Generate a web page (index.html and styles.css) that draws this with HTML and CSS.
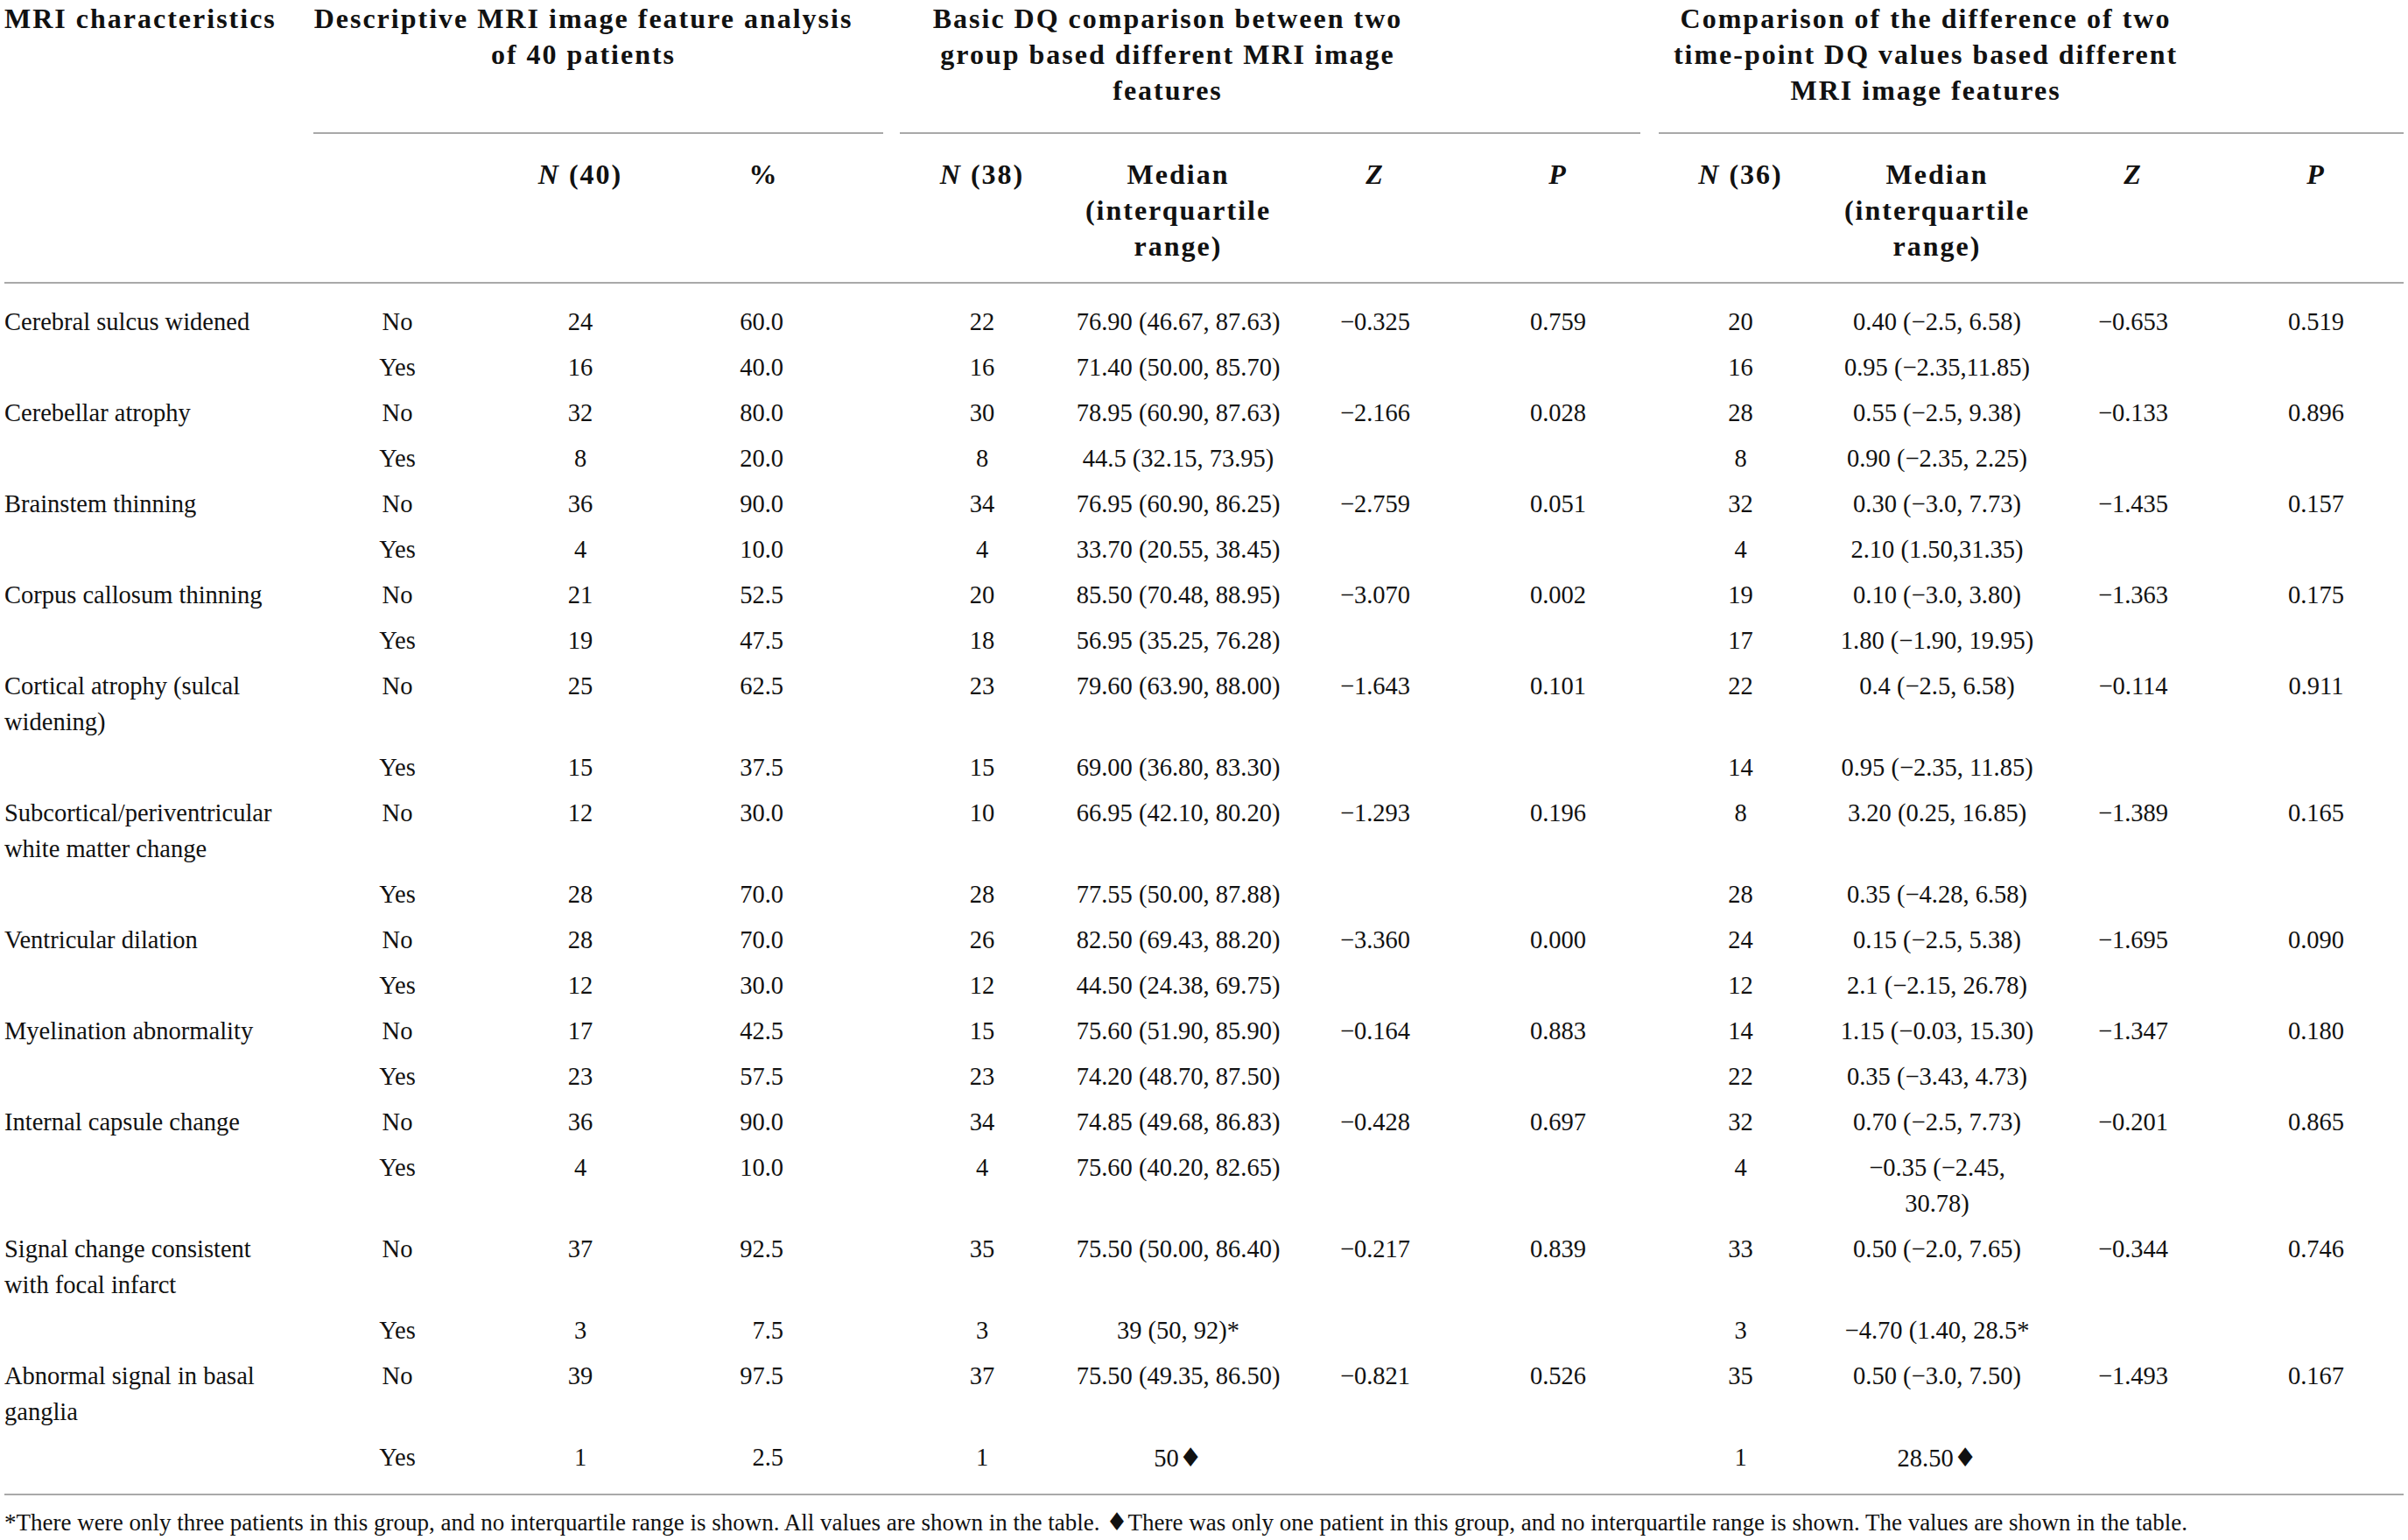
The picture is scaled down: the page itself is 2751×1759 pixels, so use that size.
FILE: index.html
```
<!DOCTYPE html>
<html>
  <head>
    <meta charset="utf-8">
    <title>MRI image features and DQ</title>
    <link rel="stylesheet" href="styles.css">
  </head>
  <body>
    <div class="page">
      <table class="mri">
        <colgroup>
          <col class="c-label">
          <col class="c-yn">
          <col class="c-n40">
          <col class="c-pct">
          <col class="c-gap1">
          <col class="c-n38">
          <col class="c-med2">
          <col class="c-z2">
          <col class="c-p2">
          <col class="c-gap2">
          <col class="c-n36">
          <col class="c-med3">
          <col class="c-z3">
          <col class="c-p3">
        </colgroup>
        <thead>
          <tr class="top">
            <th class="lead" rowspan="2">MRI characteristics</th>
            <th class="group g1" colspan="3">Descriptive MRI image feature analysis<br>of 40 patients</th>
            <th class="gap"></th>
            <th class="group g2" colspan="4">Basic DQ comparison between two<br>group based different MRI image<br>features</th>
            <th class="gap"></th>
            <th class="group g3" colspan="4">Comparison of the difference of two<br>time-point DQ values based different<br>MRI image features</th>
          </tr>
          <tr class="sub">
            <th></th>
            <th><i>N</i> (40)</th>
            <th class="pct">%</th>
            <th></th>
            <th><i>N</i> (38)</th>
            <th>Median<br>(interquartile<br>range)</th>
            <th><i>Z</i></th>
            <th class="p2"><i>P</i></th>
            <th></th>
            <th><i>N</i> (36)</th>
            <th>Median<br>(interquartile<br>range)</th>
            <th><i>Z</i></th>
            <th class="p3"><i>P</i></th>
          </tr>
        </thead>
        <tbody>
          <tr>
            <td class="label">Cerebral sulcus widened</td><td>No</td><td>24</td><td class="pct">60.0</td><td></td>
            <td>22</td><td>76.90 (46.67, 87.63)</td><td>−0.325</td><td class="p2">0.759</td><td></td>
            <td>20</td><td class="med3">0.40 (−2.5, 6.58)</td><td>−0.653</td><td class="p3">0.519</td>
          </tr>
          <tr>
            <td class="label"></td><td>Yes</td><td>16</td><td class="pct">40.0</td><td></td>
            <td>16</td><td>71.40 (50.00, 85.70)</td><td></td><td class="p2"></td><td></td>
            <td>16</td><td class="med3">0.95 (−2.35,11.85)</td><td></td><td class="p3"></td>
          </tr>
          <tr>
            <td class="label">Cerebellar atrophy</td><td>No</td><td>32</td><td class="pct">80.0</td><td></td>
            <td>30</td><td>78.95 (60.90, 87.63)</td><td>−2.166</td><td class="p2">0.028</td><td></td>
            <td>28</td><td class="med3">0.55 (−2.5, 9.38)</td><td>−0.133</td><td class="p3">0.896</td>
          </tr>
          <tr>
            <td class="label"></td><td>Yes</td><td>8</td><td class="pct">20.0</td><td></td>
            <td>8</td><td>44.5 (32.15, 73.95)</td><td></td><td class="p2"></td><td></td>
            <td>8</td><td class="med3">0.90 (−2.35, 2.25)</td><td></td><td class="p3"></td>
          </tr>
          <tr>
            <td class="label">Brainstem thinning</td><td>No</td><td>36</td><td class="pct">90.0</td><td></td>
            <td>34</td><td>76.95 (60.90, 86.25)</td><td>−2.759</td><td class="p2">0.051</td><td></td>
            <td>32</td><td class="med3">0.30 (−3.0, 7.73)</td><td>−1.435</td><td class="p3">0.157</td>
          </tr>
          <tr>
            <td class="label"></td><td>Yes</td><td>4</td><td class="pct">10.0</td><td></td>
            <td>4</td><td>33.70 (20.55, 38.45)</td><td></td><td class="p2"></td><td></td>
            <td>4</td><td class="med3">2.10 (1.50,31.35)</td><td></td><td class="p3"></td>
          </tr>
          <tr>
            <td class="label">Corpus callosum thinning</td><td>No</td><td>21</td><td class="pct">52.5</td><td></td>
            <td>20</td><td>85.50 (70.48, 88.95)</td><td>−3.070</td><td class="p2">0.002</td><td></td>
            <td>19</td><td class="med3">0.10 (−3.0, 3.80)</td><td>−1.363</td><td class="p3">0.175</td>
          </tr>
          <tr>
            <td class="label"></td><td>Yes</td><td>19</td><td class="pct">47.5</td><td></td>
            <td>18</td><td>56.95 (35.25, 76.28)</td><td></td><td class="p2"></td><td></td>
            <td>17</td><td class="med3">1.80 (−1.90, 19.95)</td><td></td><td class="p3"></td>
          </tr>
          <tr>
            <td class="label">Cortical atrophy (sulcal widening)</td><td>No</td><td>25</td><td class="pct">62.5</td><td></td>
            <td>23</td><td>79.60 (63.90, 88.00)</td><td>−1.643</td><td class="p2">0.101</td><td></td>
            <td>22</td><td class="med3">0.4 (−2.5, 6.58)</td><td>−0.114</td><td class="p3">0.911</td>
          </tr>
          <tr>
            <td class="label"></td><td>Yes</td><td>15</td><td class="pct">37.5</td><td></td>
            <td>15</td><td>69.00 (36.80, 83.30)</td><td></td><td class="p2"></td><td></td>
            <td>14</td><td class="med3">0.95 (−2.35, 11.85)</td><td></td><td class="p3"></td>
          </tr>
          <tr>
            <td class="label">Subcortical/periventricular white matter change</td><td>No</td><td>12</td><td class="pct">30.0</td><td></td>
            <td>10</td><td>66.95 (42.10, 80.20)</td><td>−1.293</td><td class="p2">0.196</td><td></td>
            <td>8</td><td class="med3">3.20 (0.25, 16.85)</td><td>−1.389</td><td class="p3">0.165</td>
          </tr>
          <tr>
            <td class="label"></td><td>Yes</td><td>28</td><td class="pct">70.0</td><td></td>
            <td>28</td><td>77.55 (50.00, 87.88)</td><td></td><td class="p2"></td><td></td>
            <td>28</td><td class="med3">0.35 (−4.28, 6.58)</td><td></td><td class="p3"></td>
          </tr>
          <tr>
            <td class="label">Ventricular dilation</td><td>No</td><td>28</td><td class="pct">70.0</td><td></td>
            <td>26</td><td>82.50 (69.43, 88.20)</td><td>−3.360</td><td class="p2">0.000</td><td></td>
            <td>24</td><td class="med3">0.15 (−2.5, 5.38)</td><td>−1.695</td><td class="p3">0.090</td>
          </tr>
          <tr>
            <td class="label"></td><td>Yes</td><td>12</td><td class="pct">30.0</td><td></td>
            <td>12</td><td>44.50 (24.38, 69.75)</td><td></td><td class="p2"></td><td></td>
            <td>12</td><td class="med3">2.1 (−2.15, 26.78)</td><td></td><td class="p3"></td>
          </tr>
          <tr>
            <td class="label">Myelination abnormality</td><td>No</td><td>17</td><td class="pct">42.5</td><td></td>
            <td>15</td><td>75.60 (51.90, 85.90)</td><td>−0.164</td><td class="p2">0.883</td><td></td>
            <td>14</td><td class="med3">1.15 (−0.03, 15.30)</td><td>−1.347</td><td class="p3">0.180</td>
          </tr>
          <tr>
            <td class="label"></td><td>Yes</td><td>23</td><td class="pct">57.5</td><td></td>
            <td>23</td><td>74.20 (48.70, 87.50)</td><td></td><td class="p2"></td><td></td>
            <td>22</td><td class="med3">0.35 (−3.43, 4.73)</td><td></td><td class="p3"></td>
          </tr>
          <tr>
            <td class="label">Internal capsule change</td><td>No</td><td>36</td><td class="pct">90.0</td><td></td>
            <td>34</td><td>74.85 (49.68, 86.83)</td><td>−0.428</td><td class="p2">0.697</td><td></td>
            <td>32</td><td class="med3">0.70 (−2.5, 7.73)</td><td>−0.201</td><td class="p3">0.865</td>
          </tr>
          <tr>
            <td class="label"></td><td>Yes</td><td>4</td><td class="pct">10.0</td><td></td>
            <td>4</td><td>75.60 (40.20, 82.65)</td><td></td><td class="p2"></td><td></td>
            <td>4</td><td class="med3">−0.35 (−2.45, 30.78)</td><td></td><td class="p3"></td>
          </tr>
          <tr>
            <td class="label">Signal change consistent with focal infarct</td><td>No</td><td>37</td><td class="pct">92.5</td><td></td>
            <td>35</td><td>75.50 (50.00, 86.40)</td><td>−0.217</td><td class="p2">0.839</td><td></td>
            <td>33</td><td class="med3">0.50 (−2.0, 7.65)</td><td>−0.344</td><td class="p3">0.746</td>
          </tr>
          <tr>
            <td class="label"></td><td>Yes</td><td>3</td><td class="pct">7.5</td><td></td>
            <td>3</td><td>39 (50, 92)*</td><td></td><td class="p2"></td><td></td>
            <td>3</td><td class="med3">−4.70 (1.40, 28.5*</td><td></td><td class="p3"></td>
          </tr>
          <tr>
            <td class="label">Abnormal signal in basal ganglia</td><td>No</td><td>39</td><td class="pct">97.5</td><td></td>
            <td>37</td><td>75.50 (49.35, 86.50)</td><td>−0.821</td><td class="p2">0.526</td><td></td>
            <td>35</td><td class="med3">0.50 (−3.0, 7.50)</td><td>−1.493</td><td class="p3">0.167</td>
          </tr>
          <tr>
            <td class="label"></td><td>Yes</td><td>1</td><td class="pct">2.5</td><td></td>
            <td>1</td><td>50<span class="dia">♦</span></td><td></td><td class="p2"></td><td></td>
            <td>1</td><td class="med3">28.50<span class="dia">♦</span></td><td></td><td class="p3"></td>
          </tr>
        </tbody>
      </table>
      <p class="note">*There were only three patients in this group, and no interquartile range is shown. All values are shown in the table. <span class="dia">♦</span>There was only one patient in this group, and no interquartile range is shown. The values are shown in the table.</p>
    </div>
  </body>
</html>
```
FILE: styles.css
```
body {
  margin: 0;
  background: #fff;
  color: #111;
  font-family: "Liberation Serif", "Times New Roman", serif;
}

.page {
  padding: 0 5px;
}

.mri {
  width: 2741px;
  table-layout: fixed;
  border-collapse: collapse;
  font-size: 28.5px;
  line-height: 41px;
}

.c-label { width: 353px; }
.c-yn    { width: 192px; }
.c-n40   { width: 226px; }
.c-pct   { width: 233px; }
.c-gap1  { width: 19px; }
.c-n38   { width: 188px; }
.c-med2  { width: 260px; }
.c-z2    { width: 190px; }
.c-p2    { width: 208px; }
.c-gap2  { width: 21px; }
.c-n36   { width: 187px; }
.c-med3  { width: 262px; }
.c-z3    { width: 186px; }
.c-p3    { width: 216px; }

/* header */
.mri th {
  font-size: 32px;
  letter-spacing: 2px;
  line-height: 41px;
  font-weight: bold;
  text-align: center;
  vertical-align: top;
  padding: 0;
}
.mri th i {
  letter-spacing: 0;
  padding-right: 2px;
}

.mri .top th {
  padding: 1px 0 27px;
}
.mri .top th.lead {
  text-align: left;
  padding: 1px 0 0;
  border-bottom: 2px solid #a9a9a9;
}
.mri th.group {
  border-bottom: 2px solid #a9a9a9;
}
.mri th.g1 { padding-right: 34px; }
.mri th.g2 { padding-right: 234px; }
.mri th.g3 { padding-right: 241px; }

.mri .sub th {
  padding: 26px 0 20px;
  border-bottom: 2px solid #a9a9a9;
}
.mri .sub th.pct { padding-right: 40px; }
.mri .sub th.p2 { padding-left: 20px; }
.mri .sub th.p3 { padding-left: 16px; }

/* body */
.mri td {
  text-align: center;
  vertical-align: top;
  padding: 5.5px 0;
}
.mri td.label {
  text-align: left;
  padding-right: 28px;
}
.mri td.pct {
  text-align: right;
  padding-right: 114px;
}
.mri td.p2 { padding-left: 20px; }
.mri td.p3 { padding-left: 16px; }
.mri td.med3 {
  padding-left: 18px;
  padding-right: 18px;
}
.mri tbody tr:first-child td {
  padding-top: 23px;
}
.mri tbody tr:last-child td {
  padding-bottom: 20px;
  border-bottom: 2px solid #a9a9a9;
}

.dia {
  font-family: "DejaVu Sans", sans-serif;
  font-size: 1.05em;
}

.note {
  margin: 16px 0 0;
  font-size: 27px;
  line-height: 30px;
}
```
